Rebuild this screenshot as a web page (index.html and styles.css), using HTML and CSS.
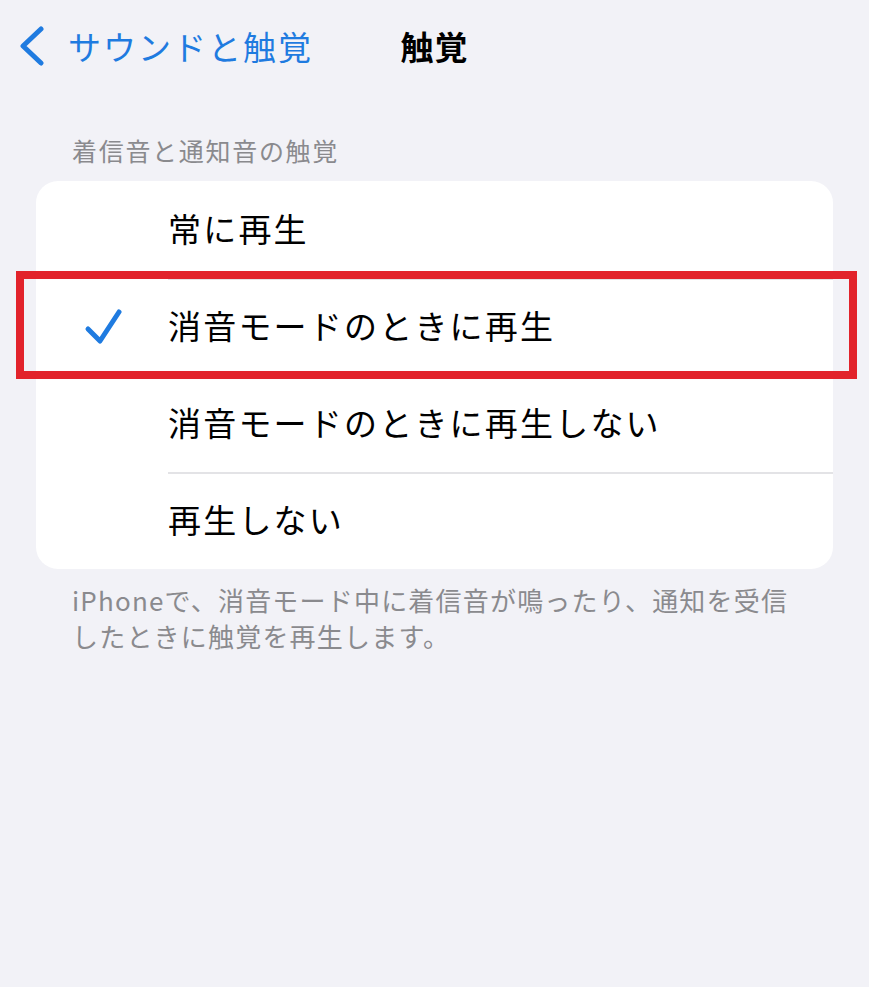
FILE: index.html
```html
<!DOCTYPE html>
<html lang="ja">
<head>
<meta charset="utf-8">
<link rel="stylesheet" href="styles.css">
</head>
<body>
<header class="nav">
  <a class="back">
    <svg class="chev" width="30" height="40" viewBox="0 0 30 40"><path d="M24 3 L6 20 L24 37" fill="none" stroke="#1f7be0" stroke-width="5" stroke-linecap="round" stroke-linejoin="round"/></svg>
    <span class="back-label">サウンドと触覚</span>
  </a>
  <h1 class="title">触覚</h1>
  <span></span>
</header>
<section class="group">
  <div class="group-header">着信音と通知音の触覚</div>
  <div class="card">
    <div class="row"><span class="check"></span><span class="label">常に再生</span></div>
    <div class="row"><span class="check"><svg width="40" height="40" viewBox="0 0 40 40"><path d="M4 22 L16 34 L35 5" fill="none" stroke="#1f7be0" stroke-width="5" stroke-linecap="round" stroke-linejoin="round"/></svg></span><span class="label">消音モードのときに再生</span></div>
    <div class="row"><span class="check"></span><span class="label">消音モードのときに再生しない</span></div>
    <div class="row"><span class="check"></span><span class="label">再生しない</span></div>
    <div class="highlight"></div>
  </div>
  <p class="group-footer">iPhoneで、消音モード中に着信音が鳴ったり、通知を受信<br>したときに触覚を再生します。</p>
</section>
</body>
</html>
```
FILE: styles.css
```css
html, body {
  margin: 0;
  padding: 0;
  background: #f2f2f7;
  font-family: "Noto Sans CJK JP", "Noto Sans", sans-serif;
  color: #000;
}
.nav {
  height: 92px;
  display: grid;
  grid-template-columns: 1fr auto 1fr;
  align-items: center;
}
.back {
  display: flex;
  align-items: center;
  padding-left: 17px;
  color: #1f7be0;
}
.chev {
  display: block;
}
.back-label {
  margin-left: 21px;
  font-size: 33px;
  letter-spacing: 2px;
  line-height: 40px;
}
.title {
  margin: 0;
  font-size: 33px;
  font-weight: 700;
  letter-spacing: 1px;
  line-height: 40px;
}
.group {
  padding-top: 40px;
}
.group-header {
  margin-left: 72px;
  font-size: 25px;
  letter-spacing: 1.7px;
  line-height: 36px;
  color: #8a8a8e;
  padding-bottom: 13px;
}
.card {
  position: relative;
  margin: 0 36px;
  background: #fff;
  border-radius: 22px;
}
.row {
  height: 97px;
  display: flex;
  align-items: center;
  position: relative;
}
.row + .row::before {
  content: "";
  position: absolute;
  top: 0;
  left: 132px;
  right: 0;
  height: 2px;
  background: #e3e3e6;
}
.check {
  width: 132px;
  display: flex;
  justify-content: flex-start;
  padding-left: 48px;
  box-sizing: border-box;
}
.check svg {
  display: block;
}
.label {
  font-size: 33px;
  letter-spacing: 2.2px;
  line-height: 40px;
  margin-top: -4px;
}
.highlight {
  position: absolute;
  left: -20px;
  top: 90px;
  width: 841px;
  height: 108px;
  box-sizing: border-box;
  border: 8px solid #e2232b;
  pointer-events: none;
}
.group-footer {
  margin: 13px 0 0 72px;
  font-size: 26px;
  letter-spacing: 1.2px;
  line-height: 36px;
  color: #8a8a8e;
}
```
